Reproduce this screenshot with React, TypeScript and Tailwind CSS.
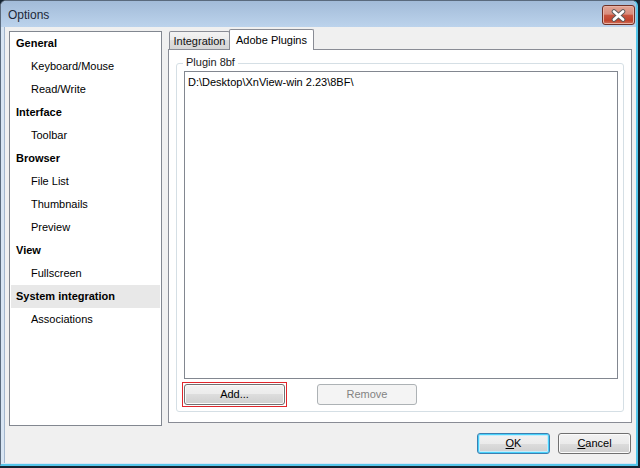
import React from "react";

const btnBase =
  "flex items-center justify-center rounded-[3px] border text-[11px] leading-none";
const btnNormal =
  "border-[#707070] text-black bg-[linear-gradient(#f2f2f2_0%,#ebebeb_50%,#dddddd_50%,#cfcfcf_100%)] shadow-[inset_0_0_0_1px_#fbfbfb]";

function Row({ label, bold, selected }: { label: string; bold?: boolean; selected?: boolean }) {
  return (
    <div
      className={
        "h-[23px] mx-[1px] flex items-center whitespace-nowrap " +
        (bold ? "pl-[5px] font-bold text-[11px] " : "pl-[20px] text-[11px] ") +
        (selected ? "bg-[#e8e8e8]" : "")
      }
    >
      {label}
    </div>
  );
}

export default function App() {
  return (
    <div className="w-[640px] h-[468px] bg-[#142331] overflow-hidden font-['Liberation_Sans',Arial,sans-serif] text-black">
      <div className="w-[638px] h-[466px] flex flex-col rounded-t-[6px] border-t border-l border-[#5a6a7d] border-r-2 border-r-[#55c6ea] border-b-2 border-b-[#55c6ea] bg-[#d8e5f3]">
        {/* Title bar */}
        <div className="h-[26px] flex items-center justify-between pl-[7px] pr-[1px] rounded-t-[5px] bg-[linear-gradient(#a2bbd8,#bcd3ec)]">
          <span className="text-[12px] text-[#1d2838] leading-none mt-[2px]">Options</span>
          <div className="w-[33px] h-[20px] mt-[2px] rounded-[3px] border border-[#6e3026] shadow-[inset_0_0_0_1px_#e8b3a6] bg-[linear-gradient(#e2a596_0%,#d88c7c_45%,#c8543e_52%,#c0442d_80%,#d0705a_100%)] flex items-center justify-center">
            <svg width="15" height="13" viewBox="0 0 15 13">
              <path d="M3 2.5 L12 10.5 M12 2.5 L3 10.5" stroke="#5a5a5a" strokeWidth="4.6" strokeLinecap="round" fill="none" />
              <path d="M3 2.5 L12 10.5 M12 2.5 L3 10.5" stroke="#ffffff" strokeWidth="2.8" strokeLinecap="round" fill="none" />
            </svg>
          </div>
        </div>

        {/* Body */}
        <div className="flex-1 flex flex-col ml-[3px] mb-[1px] border-l border-[#a3b6cd] bg-[#f0f0f0]">
          <div className="flex pl-[4px] pr-[4px] pt-[2px]">
            {/* Left tree list */}
            <div className="mt-[2px] w-[153px] h-[395px] border border-[#828790] bg-white">
              <Row label="General" bold />
              <Row label="Keyboard/Mouse" />
              <Row label="Read/Write" />
              <Row label="Interface" bold />
              <Row label="Toolbar" />
              <Row label="Browser" bold />
              <Row label="File List" />
              <Row label="Thumbnails" />
              <Row label="Preview" />
              <Row label="View" bold />
              <Row label="Fullscreen" />
              <Row label="System integration" bold selected />
              <Row label="Associations" />
            </div>

            {/* Tab control */}
            <div className="ml-[6px] w-[464px] flex flex-col">
              <div className="h-[20px] flex items-end relative z-10">
                <div className="ml-[1px] w-[61px] h-[18px] border border-b-0 border-[#898c95] rounded-t-[2px] bg-[linear-gradient(#f3f3f3_0%,#ebebeb_50%,#dedede_50%,#d6d6d6_100%)] flex items-center justify-center pt-[2px] text-[11px] text-[#111]">
                  Integration
                </div>
                <div className="-ml-[1px] w-[85px] h-[21px] -mb-[1px] border border-b-0 border-[#898c95] rounded-t-[2px] bg-white flex items-center justify-center text-[11px]">
                  Adobe Plugins
                </div>
              </div>
              <div className="h-[374px] border border-[#898c95] bg-white pl-[7px] pt-[13px]">
                {/* Group box */}
                <div className="relative w-[448px] border border-[#d5dfe5] rounded-[3px] pl-[7px] pr-[5px] pt-[7px] pb-[6px]">
                  <span className="absolute left-[6px] -top-[8px] px-[3px] bg-white text-[11px] leading-[13px] text-[#1a1a1a]">
                    Plugin 8bf
                  </span>
                  <div className="h-[308px] border border-[#828790] bg-white pl-[3px] pt-[4px]">
                    <div className="text-[11px] leading-[13px] whitespace-nowrap">D:\Desktop\XnView-win 2.23\8BF\</div>
                  </div>
                  <div className="mt-[5px] flex">
                    <div className="-m-[2px] p-[1px] border border-[#e0262c]">
                      <button className={btnBase + " " + btnNormal + " w-[101px] h-[21px]"}>
                        Add...
                      </button>
                    </div>
                    <button className={btnBase + " ml-[32px] w-[100px] h-[21px] border-[#adb2b5] bg-[#f4f4f4] text-[#838383]"}>
                      Remove
                    </button>
                  </div>
                </div>
              </div>
            </div>
          </div>

          {/* Bottom buttons */}
          <div className="flex justify-end gap-[8px] pr-[5px] mt-[7px]">
            <button className={btnBase + " w-[73px] h-[21px] border-[#3c7fb1] text-black bg-[linear-gradient(#f2f2f2_0%,#ebebeb_50%,#dddddd_50%,#cfcfcf_100%)] shadow-[inset_0_0_0_1px_#48d1fa,inset_0_0_0_2px_#c4ecfc]"}>
              <span><span className="underline">O</span>K</span>
            </button>
            <button className={btnBase + " " + btnNormal + " w-[73px] h-[21px]"}>
              <span><span className="underline">C</span>ancel</span>
            </button>
          </div>
        </div>
      </div>
    </div>
  );
}
